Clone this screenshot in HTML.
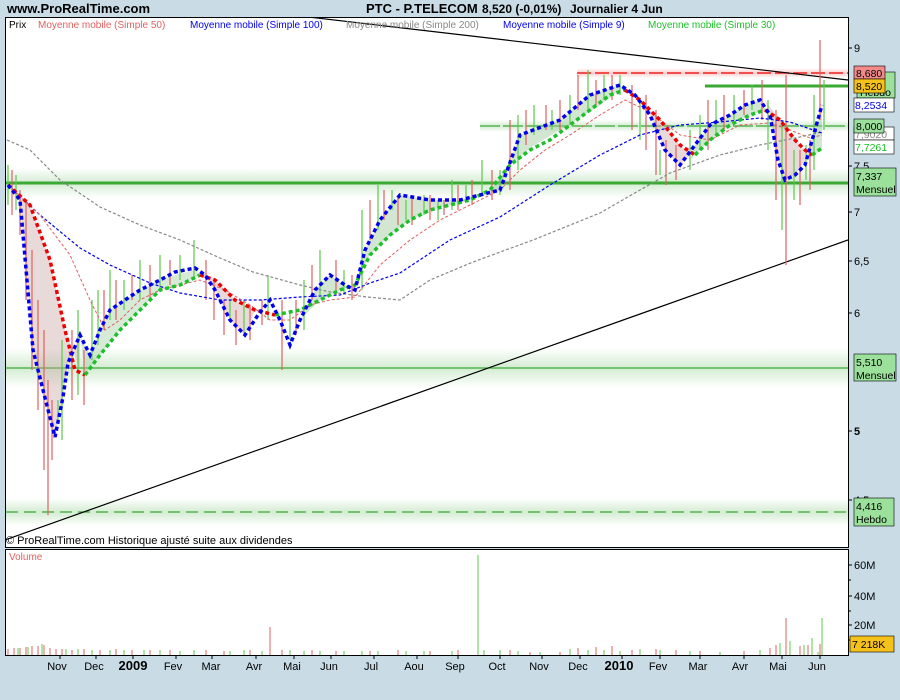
<!DOCTYPE html>
<html><head><meta charset="utf-8"><style>
body{margin:0;background:#c9dce6;width:900px;height:700px;overflow:hidden;font-family:"Liberation Sans",sans-serif}
svg{position:absolute;left:0;top:0}
</style></head><body>
<svg width="900" height="700" viewBox="0 0 900 700" font-family="Liberation Sans, sans-serif">
<defs>
<linearGradient id="glow" x1="0" y1="0" x2="0" y2="1">
<stop offset="0" stop-color="#3aaa35" stop-opacity="0"/>
<stop offset="0.5" stop-color="#3aaa35" stop-opacity="0.22"/>
<stop offset="1" stop-color="#3aaa35" stop-opacity="0"/>
</linearGradient>
<linearGradient id="glowr" x1="0" y1="0" x2="0" y2="1">
<stop offset="0" stop-color="#e33" stop-opacity="0"/>
<stop offset="0.5" stop-color="#e33" stop-opacity="0.25"/>
<stop offset="1" stop-color="#e33" stop-opacity="0"/>
</linearGradient>
<clipPath id="c1"><rect x="6" y="18" width="842" height="528"/></clipPath>
</defs>
<text x="7" y="13" font-size="13" font-weight="bold">www.ProRealTime.com</text>
<text x="366" y="13" font-size="13" font-weight="bold">PTC - P.TELECOM</text>
<text x="482" y="13" font-size="12" font-weight="bold">8,520 (-0,01%)</text>
<text x="570" y="13" font-size="12" font-weight="bold">Journalier  4 Jun</text>
<rect x="5.5" y="17.5" width="843" height="530" fill="#fff" stroke="#000"/>
<rect x="5.5" y="549.5" width="843" height="106" fill="#fff" stroke="#000"/>
<g clip-path="url(#c1)">
<rect x="6" y="168" width="842" height="30" fill="url(#glow)"/>
<rect x="6" y="348" width="842" height="40" fill="url(#glow)"/>
<rect x="6" y="498" width="842" height="28" fill="url(#glow)"/>
<rect x="480" y="120" width="368" height="12" fill="url(#glow)"/>
<rect x="577" y="68" width="271" height="10" fill="url(#glowr)"/>
<line x1="6" y1="183" x2="848" y2="183" stroke="#3aaa35" stroke-width="3"/>
<line x1="6" y1="368" x2="848" y2="368" stroke="#3aaa35" stroke-width="1.2"/>
<line x1="6" y1="512" x2="848" y2="512" stroke="#3aaa35" stroke-width="1.2" stroke-dasharray="12,6"/>
<line x1="480" y1="126" x2="848" y2="126" stroke="#3aaa35" stroke-width="1.2" stroke-dasharray="20,3"/>
<line x1="705" y1="86" x2="848" y2="86" stroke="#3aaa35" stroke-width="3"/>
<line x1="577" y1="73" x2="848" y2="73" stroke="#e22" stroke-width="1.5" stroke-dasharray="14,4"/>
<line x1="5" y1="540" x2="848" y2="240" stroke="#000" stroke-width="1.2"/>
<line x1="300" y1="16" x2="848" y2="80" stroke="#000" stroke-width="1.2"/>
<polygon fill="#c9a3a3" fill-opacity="0.4" points="8,185 20,200 33,350 43,390 55,437 63,397 68,363 80,335 80,370 65,330 50,260 30,205"/>
<polygon fill="#9cc79c" fill-opacity="0.4" points="80,335 90,355 100,330 110,310 125,300 140,290 160,280 175,275 195,270 200,275 180,285 160,290 140,310 120,330 100,355 85,375"/>
<polygon fill="#c9a3a3" fill-opacity="0.4" points="200,270 215,290 230,320 245,335 255,310 235,300 215,280"/>
<polygon fill="#9cc79c" fill-opacity="0.45" points="300,320 315,290 330,275 345,285 355,290 365,250 380,220 400,195 430,200 460,200 500,190 520,135 560,120 590,95 620,85 620,90 600,105 580,118 560,130 530,148 510,165 490,190 470,200 450,205 430,210 410,220 390,235 370,255 355,285 340,290 320,300"/>
<polygon fill="#c9a3a3" fill-opacity="0.4" points="625,85 635,95 650,115 665,150 680,165 690,155 680,145 660,120 640,100"/>
<polygon fill="#9cc79c" fill-opacity="0.45" points="690,160 695,145 710,125 730,115 745,105 760,100 765,110 750,115 730,125 710,140"/>
<polygon fill="#c9a3a3" fill-opacity="0.4" points="765,100 770,115 778,160 785,180 795,175 805,160 805,150 795,140 780,120"/>
<polygon fill="#9cc79c" fill-opacity="0.45" points="805,160 815,130 822,105 822,148 815,155"/>
<path stroke="#e06060" stroke-width="1.2" fill="none" d="M12 170V215 M20 190V235 M26 200V300 M32 250V370 M38 300V410 M44 330V470 M48 380V515 M52 400V460 M72 330V400 M84 350V405 M104 290V330 M116 280V320 M132 275V300 M150 265V300 M170 260V285 M206 260V300 M214 280V320 M224 300V335 M236 310V345 M250 305V340 M262 300V325 M282 300V370 M296 300V335 M312 265V300 M336 260V295 M352 275V300 M370 200V240 M384 190V220 M398 195V225 M412 195V225 M430 195V220 M444 200V215 M458 185V210 M472 180V205 M492 170V200 M510 120V190 M526 110V145 M546 105V130 M560 100V130 M578 75V110 M596 80V105 M612 75V100 M632 85V130 M646 95V150 M656 110V175 M666 140V185 M676 145V180 M708 100V150 M724 95V130 M744 90V115 M762 80V120 M776 110V200 M786 75V265 M800 150V205 M810 140V190 M820 40V120"/>
<path stroke="#5cc84a" stroke-width="1.2" fill="none" d="M8 165V205 M16 175V210 M58 400V420 M62 340V440 M78 310V395 M92 300V360 M98 290V345 M110 270V320 M124 280V310 M140 260V300 M160 255V290 M180 255V280 M194 240V280 M230 300V320 M244 300V335 M268 275V320 M290 310V340 M304 280V330 M320 250V295 M344 270V295 M362 210V290 M378 185V230 M392 190V210 M406 200V220 M424 195V215 M438 200V220 M452 180V210 M466 185V200 M482 160V195 M500 170V195 M518 115V170 M534 105V135 M552 110V130 M570 95V125 M588 70V110 M604 75V100 M620 75V95 M640 100V140 M660 150V175 M690 130V170 M700 115V150 M716 100V135 M734 95V120 M752 85V110 M768 100V150 M782 120V230 M794 150V200 M806 145V180 M814 95V170 M824 80V130"/>
<polyline fill="none" stroke="#888" stroke-width="1.2" stroke-dasharray="3,2" points="7,140 30,150 60,180 100,207 140,225 180,240 220,258 253,272 300,285 330,292 367,297 400,300 430,280 473,262 533,240 600,213 640,190 670,173 720,155 760,145 800,137 822,132"/>
<polyline fill="none" stroke="#0000ee" stroke-width="1.2" stroke-dasharray="3,2" points="8,185 40,215 80,248 110,265 150,283 180,293 220,300 260,300 300,297 340,295 370,283 400,273 450,240 500,217 550,185 600,155 640,135 680,125 720,122 760,118 790,122 822,133"/>
<polyline fill="none" stroke="#e06060" stroke-width="1" stroke-dasharray="3,2" points="8,185 40,215 70,255 90,300 105,330 120,320 140,300 160,290 180,285 200,280 225,290 250,305 270,320 290,320 310,305 330,300 355,297 380,265 410,240 440,220 470,205 500,190 520,170 545,150 570,135 600,115 625,100 650,112 680,135 710,140 740,125 770,123 790,130 810,138 822,135"/>
<polyline fill="none" stroke="#e00" stroke-width="3.5" stroke-dasharray="4,3" points="8,185 30,205 50,260 65,330 75,370 85,375"/>
<polyline fill="none" stroke="#1dbf2a" stroke-width="3.5" stroke-dasharray="4,3" points="85,375 100,355 120,330 140,310 160,290 180,285 200,275"/>
<polyline fill="none" stroke="#e00" stroke-width="3.5" stroke-dasharray="4,3" points="200,275 215,280 235,300 255,310 275,315"/>
<polyline fill="none" stroke="#1dbf2a" stroke-width="3.5" stroke-dasharray="4,3" points="275,315 300,310 320,300 340,290 355,285 370,255 390,235 410,220 430,210 450,205 470,200 490,190 510,165 530,150 550,140 570,125 590,110 610,95 625,90"/>
<polyline fill="none" stroke="#e00" stroke-width="3.5" stroke-dasharray="4,3" points="625,90 640,100 660,120 680,145 695,155"/>
<polyline fill="none" stroke="#1dbf2a" stroke-width="3.5" stroke-dasharray="4,3" points="695,155 710,140 730,125 750,115 765,110"/>
<polyline fill="none" stroke="#e00" stroke-width="3.5" stroke-dasharray="4,3" points="765,110 780,120 795,140 805,150 812,155"/>
<polyline fill="none" stroke="#1dbf2a" stroke-width="3.5" stroke-dasharray="4,3" points="812,155 822,148"/>
<polyline fill="none" stroke="#0000ee" stroke-width="3.5" stroke-dasharray="4,3" points="8,185 20,200 33,350 43,390 55,437 63,397 68,363 80,335 90,355 100,330 110,310 125,300 140,290 160,280 175,272 195,268 205,275 215,290 230,320 245,335 258,315 270,300 280,320 290,345 300,320 315,290 330,275 345,285 355,290 365,250 380,220 400,195 430,200 460,200 500,190 520,135 560,120 590,95 620,85 635,95 650,115 665,150 680,165 695,145 710,125 730,115 745,105 760,100 770,115 778,160 785,180 795,175 805,165 815,130 822,105"/>
</g>
<text x="9" y="28" font-size="10">Prix</text>
<text x="38" y="28" font-size="10" fill="#e06060">Moyenne mobile (Simple 50)</text>
<text x="190" y="28" font-size="10" fill="#0000ee">Moyenne mobile (Simple 100)</text>
<text x="346" y="28" font-size="10" fill="#888">Moyenne mobile (Simple 200)</text>
<text x="503" y="28" font-size="10" fill="#0000ee">Moyenne mobile (Simple 9)</text>
<text x="648" y="28" font-size="10" fill="#1dbf2a">Moyenne mobile (Simple 30)</text>
<text x="6" y="544" font-size="11">© ProRealTime.com  Historique ajusté suite aux dividendes</text>
<g font-size="11" fill="#000">
<path stroke="#000" d="M848 48h4 M848 166h4 M848 212h4 M848 261h4 M848 313h4 M848 431h4 M848 500h4"/>
<text x="854" y="52">9</text><text x="854" y="170">7,5</text><text x="854" y="216">7</text><text x="854" y="265">6,5</text><text x="854" y="317">6</text><text x="854" y="435" font-weight="bold">5</text><text x="854" y="504">4,5</text>
</g>
<g font-size="10.5">
<rect x="857" y="72" width="38" height="26" fill="#9be09b" stroke="#000" stroke-width=".6"/><text x="860" y="96">Hebdo</text>
<rect x="854" y="66" width="31" height="13" fill="#f28a8a" stroke="#000" stroke-width=".6"/><text x="856" y="77">8,680</text>
<rect x="854" y="79" width="31" height="14" fill="#f5c21b" stroke="#000" stroke-width=".6"/><text x="856" y="90">8,520</text>
<rect x="854" y="98" width="40" height="14" fill="#fff" stroke="#000" stroke-width=".6"/><text x="855" y="109" fill="#0000ee">8,2534</text>
<rect x="854" y="127" width="40" height="13" fill="#fff" stroke="#000" stroke-width=".6"/><text x="855" y="138" fill="#888">7,9020</text>
<rect x="854" y="119" width="30" height="14" fill="#9be09b" stroke="#000" stroke-width=".6"/><text x="856" y="130">8,000</text>
<rect x="854" y="140" width="40" height="14" fill="#fff" stroke="#000" stroke-width=".6"/><text x="855" y="151" fill="#1dbf2a">7,7261</text>
<rect x="854" y="168" width="42" height="28" fill="#9be09b" stroke="#000" stroke-width=".6"/><text x="856" y="180">7,337</text><text x="856" y="193">Mensuel</text>
<rect x="854" y="354" width="42" height="27" fill="#9be09b" stroke="#000" stroke-width=".6"/><text x="856" y="366">5,510</text><text x="856" y="379">Mensuel</text>
<rect x="854" y="498" width="40" height="28" fill="#9be09b" stroke="#000" stroke-width=".6"/><text x="856" y="510">4,416</text><text x="856" y="523">Hebdo</text>
</g>
<text x="9" y="560" font-size="10" fill="#e06060">Volume</text>
<path stroke="#e06060" stroke-width="1" d="M8 655V649 M14 655V648 M20 655V648 M26 655V647 M32 655V646 M38 655V646 M44 655V645 M50 655V648 M56 655V649 M62 655V649 M72 655V650 M84 655V649 M100 655V650 M116 655V649 M132 655V650 M150 655V650 M170 655V650 M206 655V650 M224 655V651 M250 655V650 M270 655V627 M282 655V650 M312 655V650 M336 655V651 M370 655V651 M398 655V650 M430 655V651 M458 655V650 M510 655V650 M530 655V652 M560 655V652 M578 655V648 M596 655V647 M612 655V646 M632 655V650 M656 655V649 M676 655V650 M700 655V651 M744 655V651 M770 655V648 M776 655V645 M786 655V618 M800 655V646 M808 655V645 M820 655V644"/>
<path stroke="#5cc84a" stroke-width="1" d="M18 655V648 M28 655V647 M42 655V644 M66 655V649 M78 655V649 M92 655V650 M110 655V650 M124 655V650 M144 655V650 M160 655V650 M180 655V651 M194 655V650 M230 655V651 M244 655V650 M262 655V651 M290 655V650 M304 655V651 M320 655V651 M344 655V651 M362 655V651 M378 655V651 M406 655V651 M424 655V651 M452 655V651 M478 655V555 M484 655V650 M500 655V650 M518 655V651 M540 655V652 M570 655V649 M588 655V650 M604 655V650 M620 655V651 M640 655V649 M660 655V650 M690 655V651 M720 655V652 M760 655V650 M780 655V643 M790 655V641 M804 655V645 M812 655V638 M818 655V652 M822 655V618"/>
<g font-size="11">
<path stroke="#000" d="M848 565h4 M848 580h3 M848 596h4 M848 611h3 M848 625h4 M848 640h3"/>
<text x="854" y="569">60M</text><text x="854" y="600">40M</text><text x="854" y="629">20M</text>
<rect x="850" y="636" width="44" height="16" fill="#f5c21b" stroke="#000" stroke-width=".6"/><text x="852" y="648" font-size="10.5">7 218K</text>
</g>
<g font-size="11" text-anchor="middle">
<path stroke="#000" d="M60 655v4 M96 655v4 M133 655v4 M176 655v4 M212 655v4 M256 655v4 M294 655v4 M331 655v4 M374 655v4 M417 655v4 M458 655v4 M500 655v4 M542 655v4 M580 655v4 M622 655v4 M660 655v4 M700 655v4 M744 655v4 M782 655v4 M820 655v4"/>
<text x="57" y="670">Nov</text><text x="94" y="670">Dec</text><text x="133" y="670" font-weight="bold" font-size="13">2009</text><text x="173" y="670">Fev</text><text x="211" y="670">Mar</text><text x="254" y="670">Avr</text><text x="292" y="670">Mai</text><text x="329" y="670">Jun</text><text x="371" y="670">Jul</text><text x="414" y="670">Aou</text><text x="455" y="670">Sep</text><text x="497" y="670">Oct</text><text x="539" y="670">Nov</text><text x="578" y="670">Dec</text><text x="619" y="670" font-weight="bold" font-size="13">2010</text><text x="658" y="670">Fev</text><text x="698" y="670">Mar</text><text x="740" y="670">Avr</text><text x="778" y="670">Mai</text><text x="817" y="670">Jun</text>
</g>
</svg>
</body></html>
